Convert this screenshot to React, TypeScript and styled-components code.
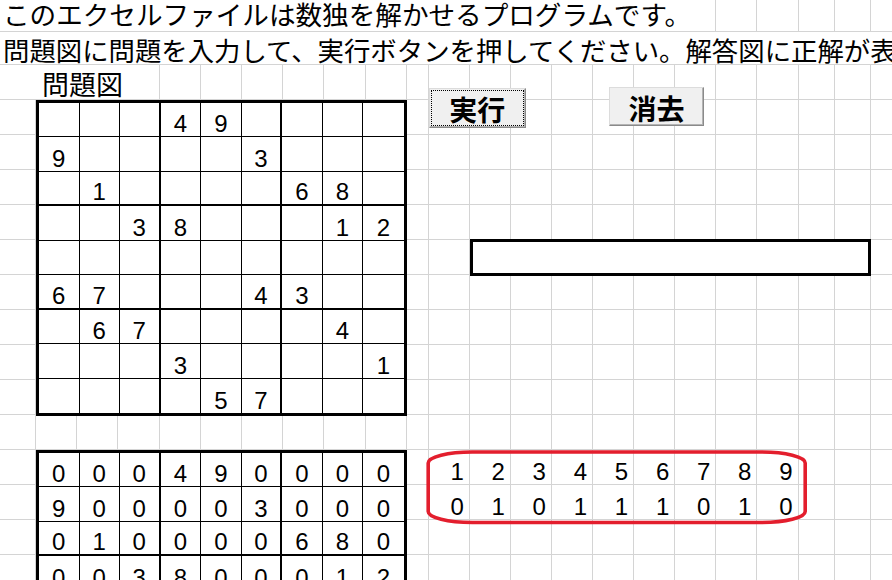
import React from "react";
import styled, { createGlobalStyle } from "styled-components";

const GlobalStyle = createGlobalStyle`
  * { box-sizing: border-box; }
  html, body { margin: 0; padding: 0; background: #fff; }
  body { font-family: "Noto Sans CJK JP", "Liberation Sans", sans-serif; color: #000; }
`;

// Excel column widths (A .. W) and row heights (1 .. 23)
const COLS = [36, ...Array(9).fill(41.2), 22, ...Array(9).fill(41.1), 36, 36, 36];
const ROWS = [32, 33, ...Array(21).fill(35)];
const colTemplate = COLS.map((w) => `${w}px`).join(" ");
const rowTemplate = ROWS.map((h) => `${h}px`).join(" ");

const puzzle = [
  [0, 0, 0, 4, 9, 0, 0, 0, 0],
  [9, 0, 0, 0, 0, 3, 0, 0, 0],
  [0, 1, 0, 0, 0, 0, 6, 8, 0],
  [0, 0, 3, 8, 0, 0, 0, 1, 2],
  [0, 0, 0, 0, 0, 0, 0, 0, 0],
  [6, 7, 0, 0, 0, 4, 3, 0, 0],
  [0, 6, 7, 0, 0, 0, 0, 4, 0],
  [0, 0, 0, 3, 0, 0, 0, 0, 1],
  [0, 0, 0, 0, 5, 7, 0, 0, 0],
];
const flags = [0, 1, 0, 1, 1, 1, 0, 1, 0];

const Sheet = styled.div`
  display: grid;
  width: 892px;
  height: 580px;
  overflow: hidden;
  background: #fff;
`;

const Layer = styled.div`
  grid-area: 1 / 1;
  display: grid;
  grid-template-columns: ${colTemplate};
  grid-template-rows: ${rowTemplate};
`;

const GridCell = styled.div<{ $noRight: boolean }>`
  border-bottom: 1px solid #d4d4d4;
  border-right: ${(p) => (p.$noRight ? "none" : "1px solid #d4d4d4")};
`;

const SheetText = styled.div<{ $row: number; $span: string; $size: number; $pb: number; $pl: number }>`
  grid-row: ${(p) => p.$row};
  grid-column: ${(p) => p.$span};
  display: flex;
  align-items: flex-end;
  min-width: 0;
  padding-left: ${(p) => p.$pl}px;
  padding-bottom: ${(p) => p.$pb}px;
  font-size: ${(p) => p.$size}px;
  line-height: ${(p) => p.$size}px;
  white-space: nowrap;
`;

const Board = styled.div<{ $row: number }>`
  grid-row: ${(p) => p.$row} / span 9;
  grid-column: 2 / span 9;
  display: grid;
  grid-template-columns: repeat(9, 1fr);
  grid-template-rows: repeat(9, 1fr);
  border: 3px solid #000;
  margin-bottom: -1px;
  background: #fff;
`;

const line = (i: number) => (i === 8 ? "none" : i % 3 === 2 ? "2px solid #000" : "1px solid #000");

const BoardCell = styled.div<{ $r: number; $c: number }>`
  display: flex;
  align-items: flex-end;
  justify-content: center;
  border-right: ${(p) => line(p.$c)};
  border-bottom: ${(p) => line(p.$r)};
  font-family: "Liberation Sans", sans-serif;
  font-size: 24px;
  line-height: 24px;
`;

const SheetButton = styled.button<{ $col: number; $ml: number; $mt: number; $w: number; $h: number; $focus?: boolean }>`
  grid-row: 3 / span 2;
  grid-column: ${(p) => p.$col} / span 4;
  justify-self: start;
  align-self: start;
  margin: ${(p) => p.$mt}px 0 0 ${(p) => p.$ml}px;
  width: ${(p) => p.$w}px;
  height: ${(p) => p.$h}px;
  padding: 2px 0 0;
  background: #f0f0f0;
  border: 1px solid;
  border-color: #dcdcdc #8a8a8a #8a8a8a #dcdcdc;
  box-shadow: inset -1px -1px 0 #b4b4b4;
  outline: ${(p) => (p.$focus ? "1px dotted #000" : "none")};
  outline-offset: -3px;
  font-family: "Noto Sans CJK JP", sans-serif;
  font-weight: bold;
  font-size: 28px;
  line-height: 1;
  color: #000;
`;

const ResultBox = styled.div`
  grid-row: 8;
  grid-column: 13 / span 10;
  margin: -1px 0 -1px;
  border: 3px solid #000;
  background: #fff;
`;

const CountCell = styled.div<{ $row: number; $col: number }>`
  grid-row: ${(p) => p.$row};
  grid-column: ${(p) => p.$col};
  display: flex;
  align-items: flex-end;
  justify-content: flex-end;
  padding: 0 6px 1px 0;
  font-family: "Liberation Sans", sans-serif;
  font-size: 24px;
  line-height: 24px;
`;

const Oval = styled.svg`
  grid-row: 14 / span 3;
  grid-column: 12 / span 10;
  justify-self: start;
  align-self: start;
  margin: -1px 0 0 -4px;
  width: 384px;
  height: 77px;
  overflow: visible;
`;

// which gridlines are hidden by text that overflows into the next cells
const hideRight = (r: number, c: number) => r === 1 || (r === 0 && c < 17) || (r === 2 && c < 3);

const PuzzleBoard = ({ row, showZero }: { row: number; showZero: boolean }) => (
  <Board $row={row}>
    {puzzle.map((cells, r) =>
      cells.map((v, c) => (
        <BoardCell key={`${r}-${c}`} $r={r} $c={c}>
          {v || showZero ? v : ""}
        </BoardCell>
      ))
    )}
  </Board>
);

export default function App() {
  return (
    <>
      <GlobalStyle />
      <Sheet>
        <Layer>
          {ROWS.map((_, r) =>
            COLS.map((_, c) => <GridCell key={`${r}-${c}`} $noRight={hideRight(r, c)} />)
          )}
        </Layer>
        <Layer>
          <SheetText $row={1} $span="1 / -1" $size={26.6} $pb={4} $pl={3}>
            このエクセルファイルは数独を解かせるプログラムです。
          </SheetText>
          <SheetText $row={2} $span="1 / -1" $size={26.4} $pb={2} $pl={3}>
            問題図に問題を入力して、実行ボタンを押してください。解答図に正解が表示されます。
          </SheetText>
          <SheetText $row={3} $span="2 / span 3" $size={27} $pb={3} $pl={6}>
            問題図
          </SheetText>

          <PuzzleBoard row={4} showZero={false} />
          <PuzzleBoard row={14} showZero={true} />

          <SheetButton $col={12} $ml={0} $mt={23} $w={97} $h={40} $focus>
            実行
          </SheetButton>
          <SheetButton $col={16} $ml={16} $mt={22} $w={95} $h={39}>
            消去
          </SheetButton>

          <ResultBox />

          {flags.map((f, i) => (
            <React.Fragment key={i}>
              <CountCell $row={14} $col={12 + i}>{i + 1}</CountCell>
              <CountCell $row={15} $col={12 + i}>{f}</CountCell>
            </React.Fragment>
          ))}

          <Oval viewBox="0 0 384 77">
            <rect x="3.2" y="3" width="377" height="70.5" rx="44" ry="11" fill="none" stroke="#e31e2d" strokeWidth="3.6" />
          </Oval>
        </Layer>
      </Sheet>
    </>
  );
}
